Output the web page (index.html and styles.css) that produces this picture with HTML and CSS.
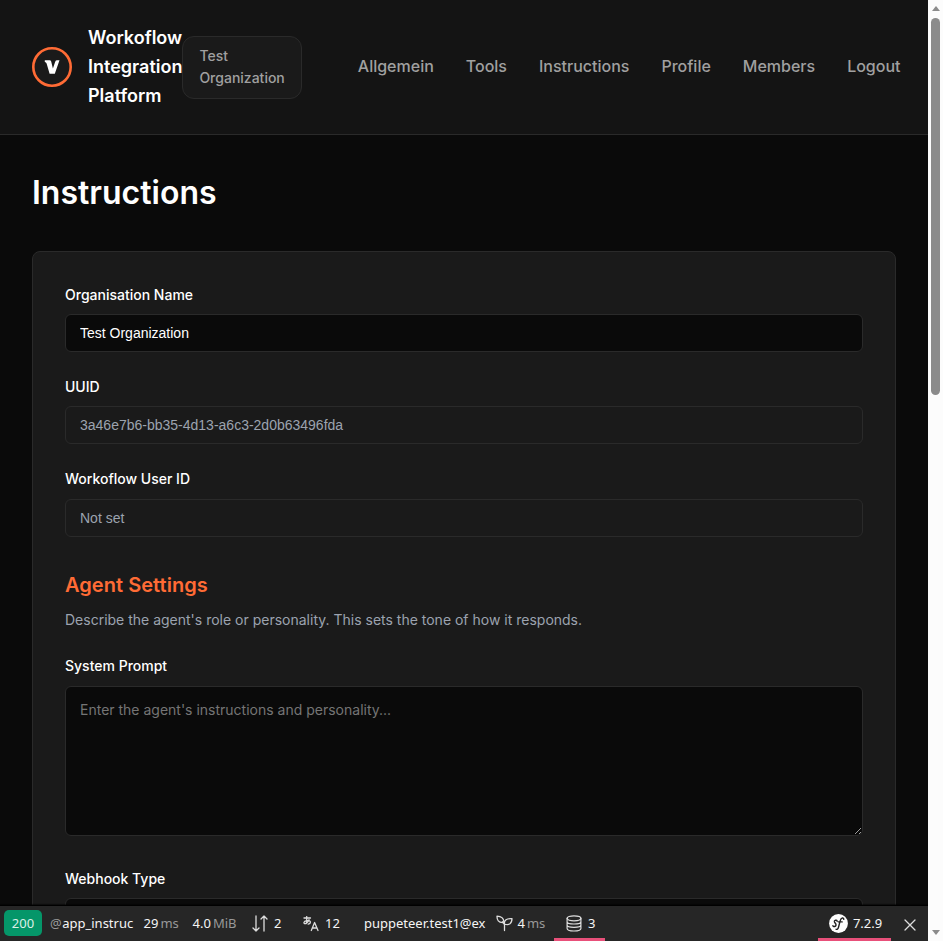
FILE: index.html
```html
<!DOCTYPE html>
<html lang="en">
<head>
<meta charset="utf-8">
<title>Instructions</title>
<link rel="stylesheet" href="styles.css">
</head>
<body>
<div class="viewport">
  <div class="page">
    <header class="header">
      <div class="brand">
        <svg class="logo" width="40" height="40" viewBox="0 0 40 40"><circle cx="20" cy="20" r="18.700" fill="#1a1a1a" stroke="#ff6b35" stroke-width="2.600"/><path d="M12.800 13.300h4.800q1.300 0 1.600 1.200l1.700 7 2.300-6.800q.5-1.400 1.900-1.400h2.400l-4.700 13.500h-5.200l-3-10.200q-.4-1.400-1.800-1.600z" fill="#fff"/></svg>
        <div class="brand-name">Workoflow Integration Platform</div>
      </div>
      <div class="org">Test Organization</div>
      <nav class="nav"><a>Allgemein</a><a>Tools</a><a>Instructions</a><a>Profile</a><a>Members</a><a>Logout</a></nav>
    </header>
    <main class="main">
      <h1>Instructions</h1>
      <form class="card">
        <div class="group"><label>Organisation Name</label><input type="text" value="Test Organization"></div>
        <div class="group"><label>UUID</label><input class="muted" type="text" value="3a46e7b6-bb35-4d13-a6c3-2d0b63496fda"></div>
        <div class="group"><label>Workoflow User ID</label><input class="muted" type="text" value="Not set"></div>
        <h2>Agent Settings</h2>
        <p class="description">Describe the agent's role or personality. This sets the tone of how it responds.</p>
        <div class="group prompt"><label>System Prompt</label><textarea placeholder="Enter the agent's instructions and personality..."></textarea></div>
        <div class="group"><label>Webhook Type</label><div class="select"></div></div>
      </form>
    </main>
    <div class="toolbar">
      <span class="status">200</span>
      <span class="item route"><i>@</i><span>app_instruc</span></span>
      <span class="item time">29<i>ms</i></span>
      <span class="item memory">4.0<i>MiB</i></span>
      <span class="item ajax"><svg width="16" height="18" viewBox="0 0 16 18"><path d="M4 1v15M1 13l3 3 3-3M12 16V1M9 4l3-3 3 3"/></svg>2</span>
      <span class="item translation"><svg width="16" height="16" viewBox="0 0 16 16"><path d="M1 2h6.500M3.700.5v5.200q0 2-1.600 2Q.8 7.700 1 6.400q.3-1.400 2.800-1.700 3.600-.3 3.600 1.500 0 1.600-2.200 2M6 3.700Q5.400 6.300 3 7.600M8.300 14.500l3.300-8L15 14.500M9.400 12h4.500"/></svg>12</span>
      <span class="item user"><span>puppeteer.test1@ex</span></span>
      <span class="item twig"><svg width="17" height="17" viewBox="0 0 17 17"><path d="M8.500 15.500v-6Q7.800 6.500 10 4.800 12 3.300 16 3.600 15.900 7.500 14 8.800 11.800 10.300 8.500 9M7.800 6.500Q7.500 1.500 1 1.200.8 7.500 6.500 7.600M8.500 9.500 6.500 6.800"/></svg>4<i>ms</i></span>
      <span class="item db alert"><svg width="16" height="17" viewBox="0 0 16 17"><ellipse cx="8" cy="3.300" rx="6.900" ry="2.500"/><path d="M1.100 3.300v10.200c0 1.400 3 2.500 6.900 2.500s6.900-1.100 6.900-2.500V3.300M1.100 6.700c0 1.400 3 2.300 6.900 2.300s6.900-.9 6.900-2.300M1.100 10.100c0 1.400 3 2.300 6.900 2.300s6.900-.9 6.900-2.300" stroke-width="1.200"/></svg>3</span>
      <span class="item version alert"><svg class="symfony" width="19" height="19" viewBox="0 0 19 19"><circle cx="9.500" cy="9.500" r="9.400" fill="#fff"/><path d="M8.100 7.300Q8 5.900 6.600 6.200 5 6.700 5.500 8.100l1.300 1.900Q7.500 12 5.700 12.500 4 12.700 3.900 11.600M14.800 5.400Q14.700 3.700 13.300 4 11.700 4.400 11 7.400L9.500 13.200Q8.800 15.800 7.100 15.300M9.400 7.900h3.800" fill="none" stroke="#222" stroke-width="1.400"/></svg>7.2.9</span>
      <span class="close"><svg width="12" height="12" viewBox="0 0 12 12"><path d="M1 1l10 10M11 1 1 11"/></svg></span>
    </div>
  </div>
  <div class="scrollbar"><span class="arrow up"></span><span class="thumb"></span><span class="arrow down"></span></div>
</div>
</body>
</html>
```
FILE: styles.css
```css
* { box-sizing: border-box; }
body { margin: 0; background: #0a0a0a; color: #fff; font: 16px/1.6 Inter, sans-serif; }
.viewport { display: flex; height: 941px; overflow: hidden; }
.page { position: relative; width: 928px; height: 941px; overflow: hidden; }
.header { display: flex; align-items: center; height: 135px; padding: 0 27.5px 0 32px; background: #141414; border-bottom: 1px solid #2a2a2a; }
.brand { display: flex; align-items: center; gap: 16px; width: 150.4px; }
.logo { flex: none; }
.brand-name { width: 94.4px; padding-bottom: 1px; font-size: 18px; line-height: 29px; font-weight: 600; }
.org { width: 120px; height: 63px; padding: 8px 16px; border: 1px solid #2a2a2a; border-radius: 12px; background: #1a1a1a; color: #a0a0a0; font-size: 14px; line-height: 22.4px; font-weight: 500; }
.nav { display: flex; gap: 32px; margin-left: auto; color: #a0a0a0; font-weight: 500; }
.main { padding: 32px; }
h1 { margin: 0 0 32.6px; font-size: 32px; line-height: 51.2px; font-weight: 600; }
.card { height: 900px; padding: 32px; background: #1a1a1a; border: 1px solid #2a2a2a; border-radius: 8px; }
.group { margin-bottom: 23.8px; }
label { display: block; margin-bottom: 8px; font-size: 14px; line-height: 22.4px; font-weight: 500; }
input { display: block; width: 100%; height: 38px; padding: 0 14px; background: #0a0a0a; color: #fff; border: 1px solid #2a2a2a; border-radius: 6px; font: 14px "Liberation Sans", sans-serif; }
.muted { background: #1a1a1a; color: #9ca3af; }
h2 { margin: 32.2px 0 8px; color: #ff6b35; font-size: 20px; line-height: 32px; font-weight: 600; letter-spacing: .04px; }
.description { margin: 0 0 24px; color: #9ca3af; font-size: 14px; line-height: 22.4px; }
.prompt { margin-bottom: 32px; }
textarea { display: block; width: 100%; height: 150px; padding: 12px 14px; resize: vertical; background: #0a0a0a; color: #fff; border: 1px solid #2a2a2a; border-radius: 6px; font: 14px/22.4px Inter, sans-serif; }
textarea::placeholder { color: #757575; }
.select { height: 42px; background: #0a0a0a; border: 1px solid #2a2a2a; border-radius: 6px; }
.toolbar { position: absolute; left: 0; bottom: 0; display: flex; align-items: center; width: 928px; height: 35px; background: #262626; box-shadow: 0 -1px 0 #000, 0 -2px 1px rgba(0,0,0,.5); color: #f5f5f5; font: 13px/17px "Noto Sans", sans-serif; white-space: nowrap; }
.toolbar svg { flex: none; fill: none; stroke: #ddd; stroke-width: 1.3; stroke-linecap: round; stroke-linejoin: round; }
.toolbar .symfony { stroke: none; }
.toolbar i { color: #999; font-style: normal; }
.status { width: 38px; height: 26px; margin: 0 0 2px 4px; border-radius: 5px; background: #059669; color: #dcefe7; line-height: 26px; text-align: center; }
.item { display: flex; align-items: center; height: 35px; }
.route { width: 84px; margin-left: 8px; gap: .5px; }
.time { width: 49px; margin-left: 9.6px; gap: 2px; }
.memory { width: 59.4px; gap: 2px; }
.ajax { width: 51px; gap: 6px; }
.translation { width: 61px; gap: 6px; }
.user { width: 120px; }
.twig { width: 58px; margin-left: 12px; gap: 5px; }
.twig i { margin-left: -3px; }
.twig svg { margin-right: -.5px; }
.db { width: 51px; padding-left: 12px; gap: 6px; }
.version { width: 73px; margin-left: auto; padding-left: 10.5px; gap: 5.4px; }
.alert { border-bottom: 3px solid #e8507a; border-top: 3px solid transparent; }
.close { display: flex; width: 37px; padding: 3px 0 0 13px; }
.scrollbar { display: flex; flex-direction: column; align-items: center; width: 15px; height: 941px; padding: 6px 1px 6px 1px; background: #fcfcfc; }
.arrow { border: 4.5px solid transparent; }
.up { border-top: 0; border-bottom: 5px solid #8b8b8b; }
.down { border-bottom: 0; border-top: 5px solid #8b8b8b; margin-top: auto; }
.thumb { width: 9px; height: 377px; margin-top: 7px; border-radius: 5px; background: #8b8b8b; }
```
